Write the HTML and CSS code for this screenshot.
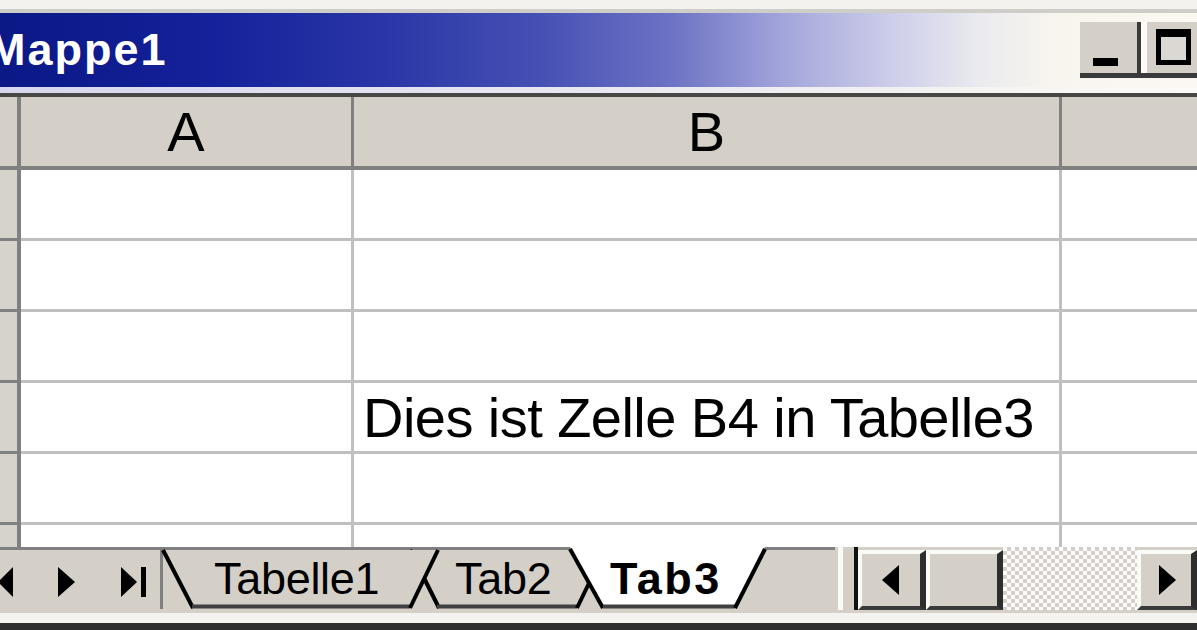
FILE: index.html
```html
<!DOCTYPE html>
<html lang="de">
<head>
<meta charset="utf-8">
<title>Mappe1</title>
<link rel="stylesheet" href="styles.css">
</head>
<body>
<div class="window">
  <div class="topstrip"></div>
  <div class="titlebar">
    <span class="title">Mappe1</span>
    <div class="caption-btns">
      <div class="cbtn min"><span class="min-glyph"></span></div>
      <div class="cgap"></div>
      <div class="cbtn max"><span class="max-glyph"></span></div>
    </div>
  </div>
  <div class="sep-light"></div>
  <div class="sep-dark"></div>
  <div class="sheet">
    <div class="row head">
      <div class="c rh"></div><div class="c ca">A</div><div class="c cb">B</div><div class="c cc"></div>
    </div>
    <div class="row"><div class="c rh"></div><div class="c ca"></div><div class="c cb"></div><div class="c cc"></div></div>
    <div class="row"><div class="c rh"></div><div class="c ca"></div><div class="c cb"></div><div class="c cc"></div></div>
    <div class="row"><div class="c rh"></div><div class="c ca"></div><div class="c cb"></div><div class="c cc"></div></div>
    <div class="row"><div class="c rh"></div><div class="c ca"></div><div class="c cb text">Dies ist Zelle B4 in Tabelle3</div><div class="c cc"></div></div>
    <div class="row"><div class="c rh"></div><div class="c ca"></div><div class="c cb"></div><div class="c cc"></div></div>
    <div class="row"><div class="c rh"></div><div class="c ca"></div><div class="c cb"></div><div class="c cc"></div></div>
  </div>
  <div class="tabbar">
    <div class="nav">
      <svg width="160" height="66" viewBox="0 0 160 66">
        <rect x="0" y="0" width="160" height="3" fill="#808080"/>
        <polygon points="13,20 13,50 -2,35" fill="#000"/>
        <polygon points="58,20 58,50 75,35" fill="#000"/>
        <polygon points="121,20 121,50 137,35" fill="#000"/>
        <rect x="141" y="20" width="5" height="30" fill="#000"/>
      </svg>
    </div>
    <div class="tabstrip">
      <svg class="tabshapes" width="675" height="66" viewBox="0 0 675 66">
        <rect x="0" y="0" width="675" height="3" fill="#808080"/>
        <rect x="0" y="0" width="3" height="62" fill="#808080"/>
        <!-- Tab2 -->
        <polygon points="250,3 278,60 417,60 445,3" fill="#d4d0c8"/>
        <line x1="250" y1="3" x2="279" y2="61" stroke="#000" stroke-width="4"/>
        <line x1="277" y1="59.5" x2="417" y2="59.5" stroke="#404040" stroke-width="4"/>
        <line x1="417" y1="61" x2="445" y2="3" stroke="#000" stroke-width="4"/>
        <!-- Tabelle1 -->
        <polygon points="3,3 32,60 250,60 277,3" fill="#d4d0c8"/>
        <line x1="3" y1="3" x2="33" y2="61" stroke="#000" stroke-width="4"/>
        <line x1="32" y1="59.5" x2="250" y2="59.5" stroke="#404040" stroke-width="4"/>
        <line x1="250" y1="61" x2="278" y2="3" stroke="#000" stroke-width="4"/>
        <!-- Tab3 active -->
        <polygon points="410,0 443,61 575,61 605,0" fill="#ffffff"/>
        <line x1="410" y1="2" x2="443" y2="61" stroke="#000" stroke-width="4"/>
        <line x1="443" y1="59.5" x2="575" y2="59.5" stroke="#404040" stroke-width="4"/>
        <line x1="575" y1="61" x2="605" y2="2" stroke="#000" stroke-width="4"/>
      </svg>
      <div class="tablabels">
        <span class="tab t1">Tabelle1</span>
        <span class="tab t2">Tab2</span>
        <span class="tab t3">Tab3</span>
      </div>
    </div>
    <div class="splitter"></div>
    <div class="scroll">
      <div class="sbtn left">
        <svg width="18" height="30" viewBox="0 0 18 30"><polygon points="17,0 17,30 0,15" fill="#000"/></svg>
      </div>
      <div class="sbtn thumb"></div>
      <div class="track"></div>
      <div class="sbtn right">
        <svg width="18" height="30" viewBox="0 0 18 30"><polygon points="0,0 0,30 17,15" fill="#000"/></svg>
      </div>
    </div>
  </div>
  <div class="bottom-light"></div>
  <div class="bottom-dark"></div>
</div>
</body>
</html>
```

FILE: styles.css
```css
html, body {
  margin: 0;
  padding: 0;
}
body {
  width: 1197px;
  height: 630px;
  overflow: hidden;
  background: #fff;
  font-family: "Liberation Sans", Arial, sans-serif;
}
.window {
  display: flex;
  flex-direction: column;
  width: 1197px;
  height: 630px;
  overflow: hidden;
}
.topstrip {
  flex: none;
  height: 13px;
  background: linear-gradient(#f3f2ee 0 9px, #cfcdc8 9px 13px);
}
.titlebar {
  flex: none;
  height: 74px;
  display: flex;
  align-items: flex-start;
  background: linear-gradient(to right,
    #0b1886 0%, #14219a 18%, #2a36a6 32%, #4550b4 45%,
    #6c72c4 56%, #a6a8dc 66%, #cfd0ea 75%, #ebebef 82%, #f8f5ee 88%, #fbf8f1 100%);
}
.title {
  color: #fff;
  font-weight: bold;
  font-size: 45px;
  letter-spacing: 2px;
  line-height: 74px;
  margin-left: -12px;
  white-space: nowrap;
}
.caption-btns {
  margin-left: auto;
  display: flex;
  padding-top: 9px;
}
.cbtn {
  box-sizing: border-box;
  height: 56px;
  background: #d4d0c8;
  border-bottom: 5px solid #3a3a3a;
}
.cbtn.min {
  width: 61px;
  border-right: 4px solid #3a3a3a;
  padding: 36px 0 0 13px;
}
.min-glyph {
  display: block;
  width: 25px;
  height: 8px;
  background: #000;
}
.cgap {
  box-sizing: border-box;
  width: 6px;
  height: 56px;
  background: #fbfaf6;
  border-bottom: 5px solid #3a3a3a;
}
.cbtn.max {
  width: 50px;
  padding: 7px 0 0 9px;
}
.max-glyph {
  display: block;
  box-sizing: border-box;
  width: 35px;
  height: 36px;
  border: 5px solid #000;
  border-top-width: 8px;
  background: #dad8d2;
}
.sep-light {
  flex: none;
  height: 6px;
  background: linear-gradient(to right, #d6d6ee, #f4f3f2 80%, #fbfaf6);
}
.sep-dark {
  flex: none;
  height: 4px;
  background: #474745;
}
.sheet {
  flex: none;
  height: 450px;
  overflow: hidden;
}
.row {
  display: grid;
  grid-template-columns: 21px 333px 708px 1fr;
  height: 71px;
}
.c {
  box-sizing: border-box;
  border-bottom: 3px solid #c0c0c0;
  background: #fff;
}
.c.rh {
  background: #d6d3cc;
  border-right: 4px solid #808080;
  border-bottom-color: #808080;
}
.c.ca, .c.cb {
  border-right: 3px solid #c0c0c0;
}
.row.head {
  height: 73px;
}
.row.head .c {
  background: #d4d0c8;
  border-bottom: 4px solid #808080;
  font-size: 56px;
  color: #000;
  display: flex;
  align-items: center;
  justify-content: center;
}
.row.head .c.ca, .row.head .c.cb {
  border-right-color: #808080;
}
.c.text {
  display: flex;
  align-items: center;
  padding-left: 9px;
  font-size: 56px;
  letter-spacing: -0.55px;
  color: #000;
  white-space: nowrap;
}
.tabbar {
  flex: none;
  height: 66px;
  display: flex;
  background: #d4d0c8;
}
.nav {
  width: 160px;
  flex: none;
}
.nav svg, .tabshapes {
  display: block;
}
.tabstrip {
  position: relative;
  width: 675px;
  flex: none;
}
.tabshapes {
  position: absolute;
  left: 0;
  top: 0;
}
.tablabels {
  position: relative;
  display: flex;
  padding-top: 5px;
  font-size: 45px;
  line-height: 54px;
  color: #000;
  white-space: nowrap;
}
.tab {
  display: block;
  letter-spacing: -0.3px;
}
.tab.t1 {
  margin-left: 54px;
  width: 241px;
}
.tab.t2 {
  width: 155px;
}
.tab.t3 {
  font-weight: bold;
  letter-spacing: 2.5px;
}
.splitter {
  flex: none;
  width: 23px;
  height: 63px;
  background: linear-gradient(to right, #d4d0c8 0 3px, #fbfbf8 3px 8px, #d4d0c8 8px 19px, #111 19px 23px);
}
.scroll {
  flex: none;
  width: 339px;
  display: flex;
  height: 63px;
}
.sbtn {
  box-sizing: border-box;
  margin-top: 3px;
  height: 60px;
  background: #d4d0c8;
  border-top: 4px solid #fbfbf8;
  border-left: 4px solid #fbfbf8;
  border-right: 6px solid #2e2e2e;
  border-bottom: 4px solid #3a3a3a;
  display: flex;
  align-items: center;
  justify-content: center;
}
.sbtn.left {
  width: 68px;
}
.sbtn.thumb {
  width: 77px;
}
.sbtn.right {
  width: 60px;
  padding-left: 4px;
}
.track {
  width: 134px;
  height: 63px;
  background-color: #fff;
  background-image: repeating-conic-gradient(#d4d0c8 0 25%, #ffffff 0 50%);
  background-size: 8px 8px;
}
.bottom-light {
  flex: none;
  height: 10px;
  background: #f4f3ef;
}
.bottom-dark {
  flex: none;
  height: 7px;
  background: #2f2f2f;
}
```
